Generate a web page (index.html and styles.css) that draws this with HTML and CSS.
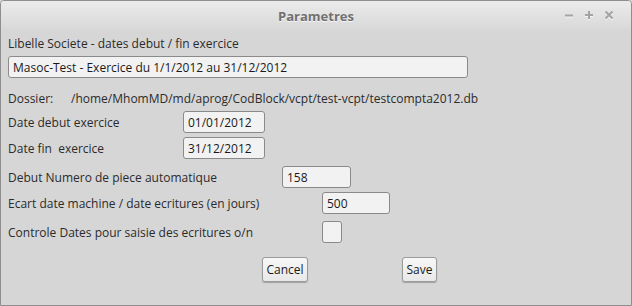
FILE: index.html
```html
<!DOCTYPE html>
<html lang="fr">
<head>
  <meta charset="UTF-8" />
  <title>Parametres</title>
  <link rel="stylesheet" href="styles.css">
</head>
<body>

  <div class="window">
    <div class="titlebar">
      <span class="title">Parametres</span>
      <div class="controls">
        <svg class="ctl" width="10" height="10" viewBox="0 0 10 10"><path d="M1 5.5H9"/></svg>
        <svg class="ctl" width="10" height="10" viewBox="0 0 10 10"><path d="M1 5H9M5 1V9"/></svg>
        <svg class="ctl" width="10" height="10" viewBox="0 0 10 10"><path d="M1.5 1.5L8.5 8.5M8.5 1.5L1.5 8.5"/></svg>
      </div>
    </div>

    <div class="content">
      <div class="row row-libelle">Libelle Societe - dates debut / fin exercice</div>

      <div class="row row-societe">
        <div class="field field-societe">Masoc-Test - Exercice du 1/1/2012 au 31/12/2012</div>
      </div>

      <div class="row row-dossier">
        <span class="label label-dossier">Dossier:</span>
        <span>/home/MhomMD/md/aprog/CodBlock/vcpt/test-vcpt/testcompta2012.db</span>
      </div>

      <div class="row row-debut">
        <span class="label label-date">Date debut exercice</span>
        <div class="field field-date">01/01/2012</div>
      </div>

      <div class="row row-fin">
        <span class="label label-date">Date fin&nbsp; exercice</span>
        <div class="field field-date">31/12/2012</div>
      </div>

      <div class="row row-numero">
        <span class="label label-numero">Debut Numero de piece automatique</span>
        <div class="field field-numero">158</div>
      </div>

      <div class="row row-ecart">
        <span class="label label-ecart">Ecart date machine / date ecritures (en jours)</span>
        <div class="field field-ecart">500</div>
      </div>

      <div class="row row-controle">
        <span class="label label-ecart">Controle Dates pour saisie des ecritures o/n</span>
        <div class="field field-check"></div>
      </div>

      <div class="row row-buttons">
        <button class="btn btn-cancel">Cancel</button>
        <button class="btn btn-save">Save</button>
      </div>
    </div>
  </div>

</body>
</html>
```

FILE: styles.css
```css
body {
  margin: 0;
  padding: 0;
  font-family: "Open Sans", "Noto Sans", sans-serif;
  font-size: 12px;
  color: #2b2b2b;
  background-color: #d6d6d6;
}

.window {
  width: 632px;
  height: 306px;
  box-sizing: border-box;
  border: 1px solid #8e8e8e;
  border-radius: 4px 4px 0 0;
  background-color: #d6d6d6;
  overflow: hidden;
}

.titlebar {
  height: 29px;
  display: flex;
  align-items: center;
  justify-content: center;
  position: relative;
  background: linear-gradient(#ebebeb, #d8d8d8);
}

.title {
  font-weight: bold;
  font-size: 13px;
  color: #707070;
  text-shadow: 0 1px #f6f6f6;
}

.controls {
  position: absolute;
  right: 17px;
  top: 9px;
  display: flex;
  gap: 10px;
}

.ctl {
  fill: none;
  stroke: #a3a3a3;
  stroke-width: 2;
  filter: drop-shadow(0 1px 0 #f6f6f6);
}

.content {
  padding: 0 7px;
}

.row {
  display: flex;
  align-items: center;
  height: 22px;
  white-space: nowrap;
}

.row-libelle { margin-top: 2px; }
.row-societe { margin-top: 2px; }
.row-dossier { margin-top: 9px; }
.row-debut { margin-top: 2px; }
.row-fin { margin-top: 4px; }
.row-numero { margin-top: 7px; }
.row-ecart { margin-top: 4px; }
.row-controle { margin-top: 7px; }

.label-dossier { width: 63px; }
.label-date { width: 175px; }
.label-numero { width: 274px; }
.label-ecart { width: 314px; }

.field {
  box-sizing: border-box;
  height: 22px;
  padding: 0 4px;
  display: flex;
  align-items: center;
  background-color: #f2f2f2;
  border: 1px solid #8a8a8a;
  border-radius: 3px;
  color: #1a1a1a;
}

.field-societe { width: 460px; }
.field-date { width: 82px; }
.field-numero { width: 69px; }
.field-ecart { width: 68px; }
.field-check { width: 20px; }

.row-buttons {
  margin-top: 14px;
  height: 25px;
  padding-left: 254px;
  gap: 94px;
}

.btn {
  box-sizing: border-box;
  height: 25px;
  padding: 0 3px;
  font-family: inherit;
  font-size: 12px;
  color: #1a1a1a;
  background: linear-gradient(#f7f7f7, #e9e9e9);
  border: 1px solid #9a9a9a;
  border-radius: 3px;
  box-shadow: 0 1px 1px rgba(0, 0, 0, 0.25);
}

.btn-cancel { width: 46px; }
.btn-save { width: 35px; }
```
